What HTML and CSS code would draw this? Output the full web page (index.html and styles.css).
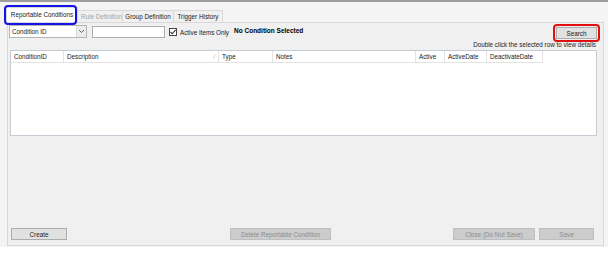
FILE: index.html
```html
<!DOCTYPE html>
<html lang="en">
  <head>
    <meta charset="UTF-8" />
    <title>Reportable Conditions</title>
    <link rel="stylesheet" href="styles.css">
  </head>
  <body>
    <div class="frame">
      <div class="tabs">
        <div class="tab tab-active mark-blue">Reportable Conditions</div>
        <div class="tab tab-off tab-rule">Rule Definition</div>
        <div class="tab tab-group">Group Definition</div>
        <div class="tab tab-trigger">Trigger History</div>
      </div>
      <div class="panel">
        <div class="toolbar">
          <div class="filters">
            <div class="combo">
              <span class="combo-text">Condition ID</span>
              <span class="combo-btn">
                <svg width="7" height="5" viewBox="0 0 7 5"><path d="M1 1 L3.5 3.5 L6 1" fill="none" stroke="#666" stroke-width="1"/></svg>
              </span>
            </div>
            <div class="textbox"></div>
            <label class="check">
              <span class="check-box">
                <svg width="8" height="8" viewBox="0 0 8 8"><path d="M1.5 4 L3.2 5.8 L6.6 1.8" fill="none" stroke="#333" stroke-width="1.1"/></svg>
              </span>
              Active Items Only
            </label>
            <div class="status">No Condition Selected</div>
          </div>
          <div class="search-side">
            <button class="btn btn-search mark-red">Search</button>
            <div class="hint">Double click the selected row to view details</div>
          </div>
        </div>
        <div class="grid">
          <div class="grid-head">
            <div class="col c1">ConditionID</div>
            <div class="col c2">Description <span class="sort">&#8260;</span></div>
            <div class="col c3">Type</div>
            <div class="col c4">Notes</div>
            <div class="col c5">Active</div>
            <div class="col c6">ActiveDate</div>
            <div class="col c7">DeactivateDate</div>
          </div>
        </div>
        <div class="actions">
          <button class="btn btn-create">Create</button>
          <button class="btn btn-off btn-delete">Delete Reportable Condition</button>
          <button class="btn btn-off btn-close">Close (Do Not Save)</button>
          <button class="btn btn-off btn-save">Save</button>
        </div>
      </div>
    </div>
  </body>
</html>
```
FILE: styles.css
```css
*{
    margin: 0;
    padding: 0;
    box-sizing: border-box;
}
body{
    background-color: #ffffff;
    font-family: "Liberation Sans", Arial, sans-serif;
    font-size: 6.3px;
    color: #1a1a1a;
}
.frame{
    width: 608px;
    height: 247px;
    border-top: 2px solid #9c9c9c;
    background-color: #f4f4f4;
    padding-left: 7px;
}
.tabs{
    display: flex;
    align-items: flex-end;
    height: 20px;
    margin-left: -1px;
}
.tab{
    height: 12px;
    line-height: 11px;
    text-align: center;
    border: 1px solid #d9d9d9;
    border-bottom: none;
    background-color: #f0f0f0;
    margin-right: -1px;
    white-space: nowrap;
}
.tab-active{
    width: 72px;
    height: 15px;
    line-height: 14px;
    background-color: #ffffff;
    position: relative;
    z-index: 1;
}
.tab-rule{
    width: 46px;
    text-align: left;
    padding-left: 3px;
}
.tab-group{ width: 52px; }
.tab-trigger{ width: 50px; }
.tab-off{
    color: #a3a3a3;
}
.mark-blue::after{
    content: "";
    position: absolute;
    left: -3px;
    top: -3px;
    right: 0;
    bottom: -3px;
    border: 2px solid #1414e6;
    border-radius: 4px;
}
.panel{
    width: 597px;
    height: 224px;
    border: 1px solid #d9d9d9;
    background-color: #f0f0f0;
    display: flex;
    flex-direction: column;
    padding: 2px 6px 5px 1px;
}
.toolbar{
    display: flex;
    justify-content: space-between;
    height: 25px;
}
.filters{
    display: flex;
    align-items: flex-start;
}
.combo{
    width: 78px;
    height: 13px;
    border: 1px solid #b5b5b5;
    background-color: #ffffff;
    display: flex;
    align-items: center;
}
.combo-text{
    flex: 1;
    padding-left: 2px;
}
.combo-btn{
    width: 10px;
    height: 11px;
    background-color: #ececec;
    border-left: 1px solid #d6d6d6;
    display: flex;
    align-items: center;
    justify-content: center;
}
.textbox{
    width: 73px;
    height: 12px;
    margin: 1px 0 0 5px;
    border: 1px solid #adadad;
    background-color: #ffffff;
}
.check{
    display: flex;
    align-items: center;
    margin: 3px 0 0 4px;
    height: 8px;
}
.check-box{
    width: 8px;
    height: 8px;
    border: 1px solid #444;
    background-color: #ffffff;
    margin-right: 3px;
    display: flex;
}
.check-box svg{
    margin: -1px;
}
.status{
    margin: 2px 0 0 5px;
    font-weight: bold;
    font-size: 6.5px;
    color: #000;
}
.search-side{
    display: flex;
    flex-direction: column;
    align-items: flex-end;
}
.btn{
    font-family: inherit;
    font-size: 6.3px;
    height: 12px;
    border: 1px solid #adadad;
    background-color: #e1e1e1;
    color: #1a1a1a;
}
.btn-search{
    width: 41px;
    margin: 2px 0 0 0;
    position: relative;
}
.mark-red::after{
    content: "";
    position: absolute;
    left: -4px;
    top: -4px;
    right: -4px;
    bottom: -4px;
    border: 2px solid #e01010;
    border-radius: 4px;
}
.hint{
    margin-top: 2px;
    margin-right: 1px;
    color: #222;
}
.grid{
    height: 86px;
    margin-left: 1px;
    background-color: #ffffff;
    border: 1px solid #c6ccd3;
}
.grid-head{
    display: flex;
    height: 12px;
}
.col{
    border-right: 1px solid #e3e3e3;
    border-bottom: 1px solid #e3e3e3;
    line-height: 11px;
    padding-left: 3px;
    white-space: nowrap;
    position: relative;
}
.c1{ width: 53px; }
.c2{ width: 155px; }
.c3{ width: 54px; }
.c4{ width: 143px; }
.c5{ width: 29px; }
.c6{ width: 42px; }
.c7{ width: 56px; }
.sort{
    position: absolute;
    right: 3px;
    top: 0;
    color: #b0b0b0;
}
.actions{
    display: flex;
    margin-top: auto;
    padding-left: 2px;
}
.btn-off{
    background-color: #cccccc;
    border-color: #bfbfbf;
    color: #8c8c8c;
}
.btn-create{ width: 56px; }
.btn-delete{ width: 101px; margin-left: 163px; }
.btn-close{ width: 82px; margin-left: 122px; }
.btn-save{ width: 55px; margin-left: 4px; }
```
